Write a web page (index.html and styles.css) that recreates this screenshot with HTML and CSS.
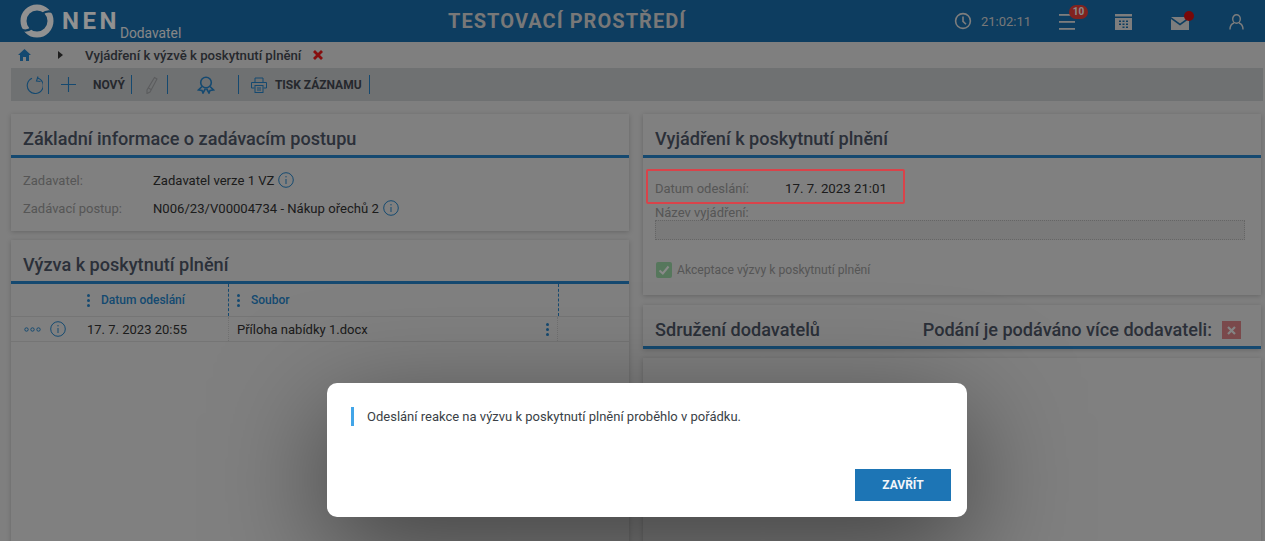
FILE: index.html
```html
<!DOCTYPE html>
<html lang="cs">
<head>
<meta charset="utf-8">
<title>NEN Dodavatel</title>
<link rel="stylesheet" href="styles.css">
</head>
<body>
<header class="topbar">
  <div class="brand">
    <svg class="logo" width="34" height="34" viewBox="0 0 34 34" fill="none">
      <circle cx="17" cy="17" r="13.500" stroke="#f2f2f2" stroke-width="6"/>
      <path d="M34 9C30 6.500 26 7 22 10M0 25c4 2.500 8 2 12-1" stroke="#1666a0" stroke-width="2.200"/>
    </svg>
    <span class="brand-name">NEN</span>
    <span class="brand-sub">Dodavatel</span>
  </div>
  <div class="env">TESTOVACÍ PROSTŘEDÍ</div>
  <div class="tools">
    <svg class="clock" width="18" height="18" viewBox="0 0 18 18" fill="none" stroke="#d0d0d0" stroke-width="1.600"><circle cx="9" cy="9" r="7.400"/><path d="M9 4.500V9.300l3 3"/></svg>
    <span class="time">21:02:11</span>
    <span class="tool menu-tool">
      <svg width="18" height="16" viewBox="0 0 18 16" fill="#d0d0d0"><rect y="0" width="16" height="1.800"/><rect y="7" width="16" height="1.800"/><rect y="14" width="16" height="1.800"/></svg>
      <span class="badge">10</span>
    </span>
    <span class="tool cal-tool">
      <svg width="17" height="16" viewBox="0 0 17 16"><rect width="17" height="2.500" fill="#d0d0d0"/><rect y="4" width="17" height="12" fill="#d0d0d0"/><g fill="#1666a0"><rect x="4" y="6.500" width="2" height="1.500"/><rect x="7.500" y="6.500" width="2" height="1.500"/><rect x="11" y="6.500" width="2" height="1.500"/><rect x="4" y="9.500" width="2" height="1.500"/><rect x="7.500" y="9.500" width="2" height="1.500"/><rect x="11" y="9.500" width="2" height="1.500"/><rect x="7.500" y="12.500" width="2" height="1.500"/><rect x="11" y="12.500" width="2" height="1.500"/></g></svg>
    </span>
    <span class="tool mail-tool">
      <svg width="18" height="13" viewBox="0 0 18 13"><path fill="#d0d0d0" d="M0 0h18L9 6.500zM0 2l9 6.500L18 2v11H0z"/></svg>
      <span class="dot"></span>
    </span>
    <span class="tool user-tool">
      <svg width="15" height="16" viewBox="0 0 15 16" fill="none" stroke="#d0d0d0" stroke-width="1.400"><ellipse cx="7.500" cy="5" rx="3.800" ry="4.200"/><path d="M1 15.500c0-4 2.500-6 4-6.500M14 15.500c0-4-2.500-6-4-6.500"/></svg>
    </span>
  </div>
</header>

<nav class="crumbs">
  <svg class="home" width="13" height="12" viewBox="0 0 13 12"><path fill="#237bbb" d="M6.500 0 13 6h-2v6H8V8H5v4H2V6H0z"/></svg>
  <svg class="caret" width="5" height="8" viewBox="0 0 5 8"><path fill="#333" d="M0 0l5 4-5 4z"/></svg>
  <span class="crumb-text">Vyjádření k výzvě k poskytnutí plnění</span>
  <svg class="crumb-x" width="10" height="10" viewBox="0 0 10 10"><path stroke="#e01818" stroke-width="2.800" d="M1 1l8 8M9 1l-8 8"/></svg>
</nav>

<div class="toolbar">
  <svg class="tb-ic first" width="18" height="18" viewBox="0 0 18 18" fill="none" stroke="#237bbb" stroke-width="1.100"><path d="M7 2.200A8 8 0 1 0 12 1.700"/><path d="M13 0.500 11.500 5l4 .5"/></svg>
  <span class="sep"></span>
  <svg class="tb-ic plus" width="15" height="15" viewBox="0 0 15 15" stroke="#237bbb" stroke-width="1.100"><path d="M7.500 0v15M0 7.500h15"/></svg>
  <span class="tb-label novy">NOVÝ</span>
  <span class="sep"></span>
  <svg class="tb-ic pen" width="12" height="18" viewBox="0 0 12 18" fill="none" stroke="#989a9c" stroke-width="1.100"><path d="M8.500 1.500 11 3 4 16l-3 1.500L1 14zM2.500 12l2.500 1.500"/></svg>
  <span class="sep"></span>
  <svg class="tb-ic seal" width="18" height="18" viewBox="0 0 18 18" fill="none" stroke="#237bbb" stroke-width="1.600"><circle cx="9" cy="6.500" r="5.300"/><path d="M5 10.500 1.500 14l3.500.5 1 2.500 2.500-4.500M13 10.500l3.500 3.500-3.500.5-1 2.500-2.500-4.500"/></svg>
  <span class="sep"></span>
  <svg class="tb-ic print" width="16" height="16" viewBox="0 0 16 16" fill="none" stroke="#237bbb" stroke-width="1"><path d="M4 5V1h8v4M3.500 11H.5V5.500h15V11h-3"/><rect x="4" y="8.500" width="8" height="7"/><path d="M6 11h4M6 13h4"/></svg>
  <span class="tb-label tisk">TISK ZÁZNAMU</span>
  <span class="sep"></span>
</div>

<main class="content">
  <div class="col">
    <section class="panel info">
      <h2 class="panel-title">Základní informace o zadávacím postupu</h2>
      <div class="panel-body">
        <div class="field"><span class="lbl">Zadavatel:</span><span class="val">Zadavatel verze 1 VZ</span><svg class="info-ic" width="16" height="16" viewBox="0 0 16 16" fill="none" stroke="#237bbb"><circle cx="8" cy="8" r="7.300"/><path d="M8 7v5M8 4v1.400"/></svg></div>
        <div class="field"><span class="lbl">Zadávací postup:</span><span class="val">N006/23/V00004734 - Nákup ořechů 2</span><svg class="info-ic" width="16" height="16" viewBox="0 0 16 16" fill="none" stroke="#237bbb"><circle cx="8" cy="8" r="7.300"/><path d="M8 7v5M8 4v1.400"/></svg></div>
      </div>
    </section>
    <section class="panel calls">
      <h2 class="panel-title">Výzva k poskytnutí plnění</h2>
      <div class="grid-head">
        <div class="c1"></div>
        <div class="c2"><span class="dots"><i></i><i></i><i></i></span><span class="th">Datum odeslání</span></div>
        <div class="c3 dashed"><span class="dots"><i></i><i></i><i></i></span><span class="th">Soubor</span></div>
        <div class="c4 dashed"></div>
      </div>
      <div class="grid-row">
        <div class="c1 actions">
          <svg width="17" height="5" viewBox="0 0 17 5" fill="none" stroke="#237bbb"><circle cx="2.500" cy="2.500" r="1.700"/><circle cx="8.500" cy="2.500" r="1.700"/><circle cx="14.500" cy="2.500" r="1.700"/></svg>
          <svg class="row-info" width="16" height="16" viewBox="0 0 16 16" fill="none" stroke="#237bbb"><circle cx="8" cy="8" r="7.300"/><path d="M8 7v5M8 4v1.400"/></svg>
        </div>
        <div class="c2 cell">17. 7. 2023 20:55</div>
        <div class="c3 cell file"><span>Příloha nabídky 1.docx</span><span class="dots"><i></i><i></i><i></i></span></div>
        <div class="c4"></div>
      </div>
    </section>
  </div>
  <div class="col">
    <section class="panel reply">
      <h2 class="panel-title">Vyjádření k poskytnutí plnění</h2>
      <div class="reply-body">
        <div class="sent"><span class="lbl sent-lbl">Datum odeslání:</span><span class="val sent-val">17. 7. 2023 21:01</span></div>
        <label class="lbl name-lbl">Název vyjádření:</label>
        <div class="name-input"></div>
        <div class="accept">
          <svg width="16" height="16" viewBox="0 0 16 16"><rect width="16" height="16" rx="2" fill="#8fc79a"/><path d="M3.500 8.500 6.800 11.500 12.500 4.500" fill="none" stroke="#e6e6e6" stroke-width="2"/></svg>
          <span>Akceptace výzvy k poskytnutí plnění</span>
        </div>
      </div>
    </section>
    <section class="panel assoc">
      <div class="panel-title split">
        <h2>Sdružení dodavatelů</h2>
        <div class="multi"><span>Podání je podáváno více dodavateli:</span>
          <span class="xbox"><svg width="9" height="9" viewBox="0 0 9 9"><path stroke="#ddd" stroke-width="2.200" d="M1 1l7 7M8 1L1 8"/></svg></span>
        </div>
      </div>
    </section>
    <section class="panel rest"></section>
  </div>
</main>

<div class="overlay"></div>
<div class="annotation"></div>
<div class="dialog" role="dialog">
  <p class="message">Odeslání reakce na výzvu k poskytnutí plnění proběhlo v pořádku.</p>
  <div class="dialog-actions"><button class="close">ZAVŘÍT</button></div>
</div>
</body>
</html>
```

FILE: styles.css
```css
* { box-sizing: border-box; }
html, body { height: 100%; }
body {
  margin: 0;
  height: 541px;
  overflow: hidden;
  background: #d4d4d4;
  font-family: Roboto, "Liberation Sans", sans-serif;
  color: #2f2f2f;
  position: relative;
}
h2 { margin: 0; font: inherit; }

.topbar {
  height: 42px;
  background: #1666a0;
  display: flex;
  align-items: center;
  position: relative;
}
.brand { display: flex; align-items: flex-start; height: 42px; width: 440px; padding-left: 20px; }
.logo { margin-top: 4px; }
.brand-name {
  margin-left: 8px;
  margin-top: 9px;
  font-size: 24px;
  line-height: 24px;
  font-weight: 700;
  letter-spacing: 3.500px;
  color: #f2f2f2;
}
.brand-sub { margin-top: 25px; font-size: 13.800px; line-height: 16px; color: #e0e0e0; }
.env {
  margin-left: 8px;
  width: 240px;
  font-size: 20px;
  font-weight: 700;
  letter-spacing: 1.050px;
  color: #c8c8c8;
  white-space: nowrap;
}
.tools { margin-left: auto; display: flex; align-items: center; padding-right: 21px; }
.clock { margin-right: 9px; }
.time { font-size: 13px; font-weight: 400; color: #c8c8c8; width: 49px; margin-right: 29px; }
.tool { position: relative; display: flex; }
.menu-tool { top: 1px; }
.cal-tool { margin-left: 38px; top: 1px; }
.mail-tool { margin-left: 39px; top: 2px; }
.user-tool { margin-left: 40px; top: 1px; }
.badge {
  position: absolute;
  left: 10px;
  top: -9px;
  width: 19px;
  height: 14px;
  border-radius: 7px;
  background: #d83a34;
  color: #e6e6e6;
  font-size: 10px;
  line-height: 14px;
  font-weight: 700;
  text-align: center;
}
.dot { position: absolute; left: 13px; top: -6px; width: 10px; height: 10px; border-radius: 50%; background: #c80e0e; }

.crumbs { height: 26px; display: flex; align-items: center; padding-left: 18px; }
.caret { margin-left: 27px; }
.crumb-text { margin-left: 22px; font-size: 13.200px; font-weight: 500; color: #3f444c; }
.crumb-x { margin-left: 12px; }

.toolbar {
  height: 33px;
  margin: 0 2px 0 11px;
  background: #b9bcbf;
  display: flex;
  align-items: center;
}
.sep { width: 1px; height: 19px; background: #237bbb; }
.tb-ic { display: block; flex: none; }
.first { margin-left: 14px; margin-right: 5px; }
.plus { margin-left: 12px; }
.novy { margin-left: 17px; margin-right: 6px; }
.pen { margin-left: 14px; margin-right: 9px; }
.seal { margin-left: 29px; margin-right: 23px; }
.print { margin-left: 12px; }
.tisk { margin-left: 8px; margin-right: 7px; }
.tb-label { font-size: 12px; font-weight: 700; color: #3f444c; white-space: nowrap; }

.content { display: flex; gap: 14px; padding: 13px 4px 0 11px; }
.col { width: 618px; display: flex; flex-direction: column; }
.panel { background: #d6d6d6; box-shadow: 0 1px 5px rgba(0,0,0,.2); }
.panel-title {
  height: 44px;
  padding: 14px 12px 0;
  border-bottom: 3px solid #237bbb;
  font-size: 18.100px;
  line-height: 22px;
  font-weight: 500;
  color: #485060;
}
.lbl { font-size: 13px; color: #8f8f8f; }
.val { font-size: 13.100px; color: #2f2f2f; }

.info { height: 117px; margin-bottom: 9px; }
.panel-body { padding: 14px 12px 0; }
.field { display: flex; align-items: center; height: 16px; margin-bottom: 12px; }
.field .lbl { width: 130px; }
.info-ic { margin-left: 4px; }

.calls { height: 320px; }
.grid-head, .grid-row { display: grid; grid-template-columns: 76px 141px 330px 1fr; }
.grid-head { height: 33px; border-bottom: 1px solid #c4c4c4; }
.grid-head > div { display: flex; align-items: center; }
.dashed { border-left: 1px dashed #237bbb; }
.grid-head .c3 { padding-left: 8px; }
.dots { display: inline-flex; flex-direction: column; gap: 2px; width: 3px; flex: none; }
.dots i { width: 3px; height: 3px; border-radius: 50%; background: #237bbb; }
.th { margin-left: 11px; font-size: 12px; font-weight: 500; color: #237bbb; }
.grid-row { height: 25px; border-bottom: 1px solid #c4c4c4; align-items: stretch; }
.actions { display: flex; align-items: center; padding-left: 13px; }
.row-info { margin-left: 9px; }
.cell { font-size: 13px; display: flex; align-items: center; border-left: 1px dotted #bbb; color: #2f2f2f; }
.grid-row .c2 { border-left: 0; }
.grid-row .c3 { border-right: 1px dotted #bbb; }
.file { padding-left: 8px; justify-content: space-between; padding-right: 8px; }

.reply { height: 181px; margin-bottom: 10px; }
.reply-body { padding: 0 16px 0 12px; position: relative; }
.sent { display: flex; align-items: center; height: 16px; margin-top: 22px; }
.sent-lbl { width: 130px; }
.sent-val { font-size: 13.250px; }
.name-lbl { display: block; margin-top: 9px; height: 15px; line-height: 16px; font-size: 13px; }
.name-input { height: 20px; background: #cccccc; border: 1px dotted #a8a8a8; }
.accept { display: flex; align-items: center; margin-top: 22px; margin-left: 1px; height: 16px; font-size: 12.150px; color: #8f8f8f; }
.accept span { margin-left: 5px; }

.assoc { height: 44px; margin-bottom: 9px; }
.split { display: flex; justify-content: space-between; align-items: flex-start; padding-right: 20px; }
.multi { display: flex; align-items: center; }
.xbox { margin-left: 10px; width: 19px; height: 18px; background: #cc7a7e; display: flex; align-items: center; justify-content: center; }
.rest { flex: 1; height: 260px; }

.overlay { position: absolute; inset: 0; background: rgba(0,0,0,.4); }
.annotation {
  position: absolute;
  left: 646px;
  top: 169px;
  width: 259px;
  height: 35px;
  border: 2px solid #d9434a;
  border-radius: 2px;
}
.dialog {
  position: absolute;
  left: 327px;
  top: 383px;
  width: 640px;
  height: 134px;
  background: #fff;
  border-radius: 10px;
  box-shadow: 0 30px 110px rgba(0,0,0,.5);
  padding: 24px 16px 16px 24px;
  display: flex;
  flex-direction: column;
}
.message {
  margin: 0;
  height: 19px;
  border-left: 3px solid #42a5e8;
  padding-left: 13px;
  font-size: 13px;
  line-height: 19px;
  color: #3a3f46;
}
.dialog-actions { margin-top: auto; display: flex; justify-content: flex-end; }
.close {
  width: 96px;
  height: 32px;
  border: 0;
  background: #1d75b5;
  color: #f2f6fa;
  font: 700 12px Roboto, sans-serif;
}
```
